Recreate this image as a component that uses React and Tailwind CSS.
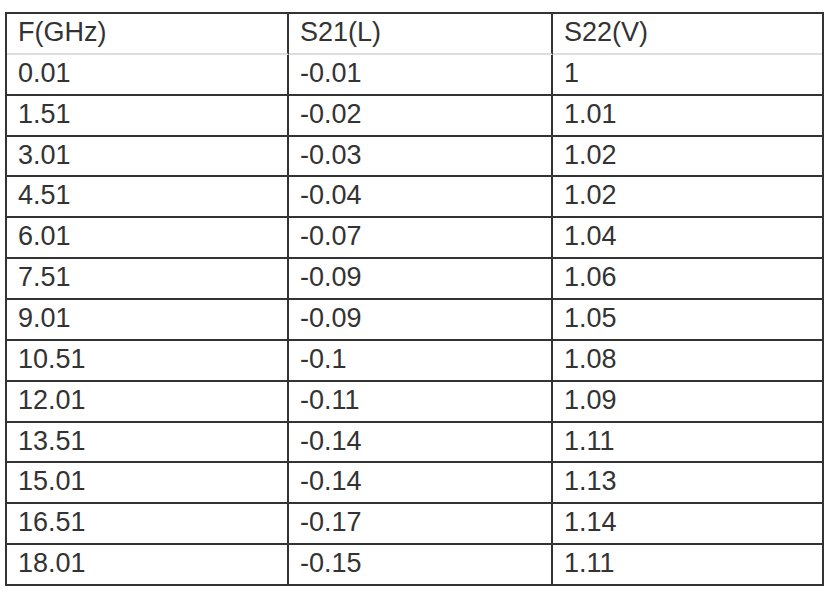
const rows = [
  ["0.01", "-0.01", "1"],
  ["1.51", "-0.02", "1.01"],
  ["3.01", "-0.03", "1.02"],
  ["4.51", "-0.04", "1.02"],
  ["6.01", "-0.07", "1.04"],
  ["7.51", "-0.09", "1.06"],
  ["9.01", "-0.09", "1.05"],
  ["10.51", "-0.1", "1.08"],
  ["12.01", "-0.11", "1.09"],
  ["13.51", "-0.14", "1.11"],
  ["15.01", "-0.14", "1.13"],
  ["16.51", "-0.17", "1.14"],
  ["18.01", "-0.15", "1.11"],
];

const header = ["F(GHz)", "S21(L)", "S22(V)"];

const App = () => {
  return (
    <div className="min-h-screen bg-white pl-[5px] pt-[12px] font-['Liberation_Sans',Arial,sans-serif] text-[27px] text-[#333]">
      <div className="grid w-[819px] grid-cols-[282px_264px_1fr] border-2 border-[#333]">
        {/* header row */}
        {header.map((h, i) => (
          <div
            key={h}
            className={`h-[40.86px] border-b-2 border-b-[#ddd] pl-[11px] leading-[36px] ${
              i < 2 ? "border-r-2 border-r-[#333]" : ""
            }`}
          >
            {h}
          </div>
        ))}

        {/* data rows */}
        {rows.map((row, r) =>
          row.map((cell, i) => (
            <div
              key={`${r}-${i}`}
              className={`pl-[11px] leading-[36px] ${
                r < rows.length - 1
                  ? "h-[40.86px] border-b-2 border-b-[#333]"
                  : "h-[38.86px]"
              } ${i < 2 ? "border-r-2 border-r-[#333]" : ""}`}
            >
              {cell}
            </div>
          ))
        )}
      </div>
    </div>
  );
};

export default App;
